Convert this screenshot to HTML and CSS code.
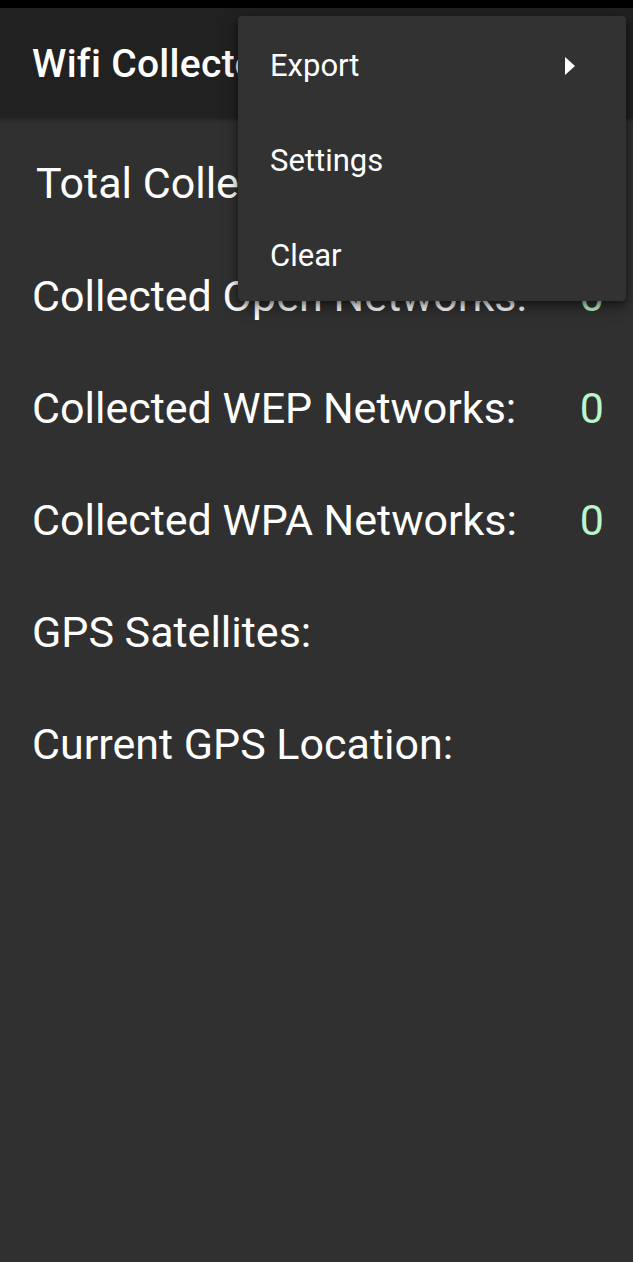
FILE: index.html
```html
<!DOCTYPE html>
<html lang="en">
<head>
    <meta charset="UTF-8">
    <meta name="viewport" content="width=device-width, initial-scale=1.0">
    <title>Wifi Collector</title>
    <link rel="stylesheet" href="styles.css">
</head>
<body>
    <div class="status-bar"></div>

    <header class="toolbar">
        <h1 class="title">Wifi Collector</h1>
    </header>

    <main class="stats">
        <div class="stat total">
            <span class="label">Total Collected Networks:</span>
            <span class="value">0</span>
        </div>
        <div class="stat">
            <span class="label">Collected Open Networks:</span>
            <span class="value">0</span>
        </div>
        <div class="stat">
            <span class="label">Collected WEP Networks:</span>
            <span class="value">0</span>
        </div>
        <div class="stat">
            <span class="label">Collected WPA Networks:</span>
            <span class="value">0</span>
        </div>
        <div class="stat">
            <span class="label">GPS Satellites:</span>
        </div>
        <div class="stat">
            <span class="label">Current GPS Location:</span>
        </div>
    </main>

    <!-- overflow menu, opened over the toolbar -->
    <ul class="menu">
        <li class="menu-item">
            Export
            <svg class="submenu-arrow" width="12" height="18" viewBox="0 0 12 18">
                <path d="M1 0 L11 9 L1 18 Z" fill="#fff"/>
            </svg>
        </li>
        <li class="menu-item">Settings</li>
        <li class="menu-item">Clear</li>
    </ul>
</body>
</html>
```

FILE: styles.css
```css
:root {
    --toolbar-color: #212121;
    --bg-color: #303030;
    --menu-color: #323232;
    --text-color: #ffffff;
    --value-color: #b9f6ca;
}

* {
    margin: 0;
    padding: 0;
    box-sizing: border-box;
}

html, body {
    height: 100%;
}

body {
    font-family: Roboto, 'Noto Sans', Arial, sans-serif;
    background: var(--bg-color);
    color: var(--text-color);
    position: relative;
    overflow: hidden;
}

.status-bar {
    height: 8px;
    background: #000;
}

.toolbar {
    height: 110px;
    background: var(--toolbar-color);
    display: flex;
    align-items: center;
    padding: 2px 0 0 32px;
    box-shadow: 0 2px 4px rgba(0, 0, 0, 0.3);
}

.title {
    font-size: 39px;
    font-weight: 500;
    letter-spacing: 0.3px;
}

.stats {
    padding: 8px 29px 0 32px;
}

.stat {
    display: flex;
    justify-content: space-between;
    align-items: center;
    height: 112px;
    font-size: 43px;
    font-weight: 400;
    line-height: 1;
}

.stat.total {
    height: 114px;
    padding-left: 4px;
}

.value {
    color: var(--value-color);
}

.menu {
    list-style: none;
    position: absolute;
    top: 16px;
    left: 238px;
    width: 388px;
    background: var(--menu-color);
    border-radius: 4px;
    box-shadow: 0 6px 16px rgba(0, 0, 0, 0.45), 0 2px 4px rgba(0, 0, 0, 0.3);
}

.menu-item {
    height: 95px;
    display: flex;
    align-items: center;
    justify-content: space-between;
    padding: 4px 50px 0 32px;
    font-size: 31px;
}

.submenu-arrow {
    display: block;
}
```
